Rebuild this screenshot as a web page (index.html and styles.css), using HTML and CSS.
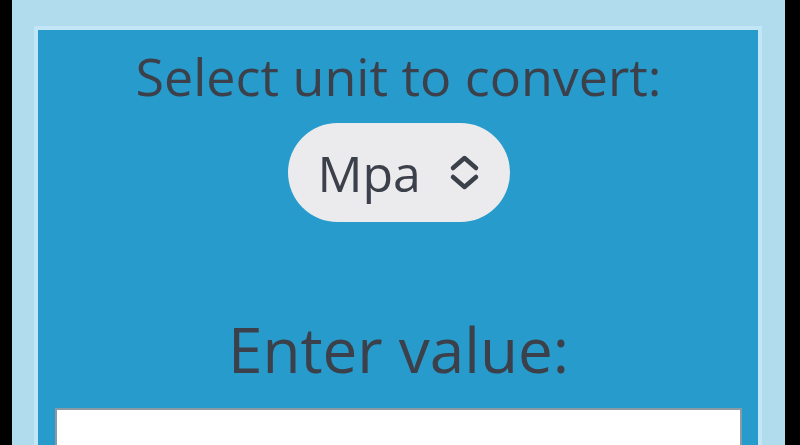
FILE: index.html
```html
<!DOCTYPE html>
<html lang="en">
<head>
  <meta charset="UTF-8" />
  <meta name="viewport" content="width=device-width, initial-scale=1" />
  <title>Pressure Converter</title>
  <link rel="stylesheet" href="styles.css">
</head>
<body>
  <div class="frame">
    <div class="panel">
      <label class="heading" for="unit">Select unit to convert:</label>

      <div class="unit-select">
        <select id="unit" name="unit">
          <option value="mpa">Mpa</option>
          <option value="kpa">Kpa</option>
          <option value="psi">Psi</option>
          <option value="bar">Bar</option>
        </select>
        <svg class="chevrons" viewBox="0 0 33 37" width="33" height="37" aria-hidden="true">
          <path d="M5 14 L16.5 4 L28 14" />
          <path d="M5 23 L16.5 33 L28 23" />
        </svg>
      </div>

      <label class="heading big" for="value">Enter value:</label>
      <input type="text" id="value" name="value" />
    </div>
  </div>
</body>
</html>
```

FILE: styles.css
```css
:root {
  --outer-color: #000;
  --frame-color: #b1dcee;
  --panel-color: #279bcb;
  --text-color: #3c404a;
  --pill-color: #ebebed;
}
* {
  box-sizing: border-box;
}
body {
  margin: 0;
  padding: 0 15px 0 12px;
  background-color: var(--outer-color);
  font-family: 'Open Sans', 'Noto Sans', sans-serif;
  color: var(--text-color);
  overflow: hidden;
}
.frame {
  background-color: var(--frame-color);
  padding: 26px 23px 0 22px;
  min-height: 100vh;
}
.panel {
  background-color: var(--panel-color);
  border: 4px solid #c2e6f5;
  border-bottom: none;
  min-height: 600px;
  display: flex;
  flex-direction: column;
  align-items: center;
  padding: 12px 16px 0 17px;
}
.heading {
  display: block;
  font-size: 52px;
  line-height: 62px;
  margin-top: 3px;
}
.heading.big {
  font-size: 62px;
  line-height: 74px;
  margin-top: 90px;
}
.unit-select {
  margin-top: 16px;
  height: 99px;
  width: 222px;
  border-radius: 50px;
  background-color: var(--pill-color);
  display: flex;
  align-items: center;
  gap: 26px;
  padding: 0 28px 0 30px;
}
.unit-select select {
  appearance: none;
  -webkit-appearance: none;
  border: none;
  background: transparent;
  font-family: inherit;
  font-size: 50px;
  color: var(--text-color);
  padding: 0;
  margin: 0;
  outline: none;
}
.chevrons {
  flex: none;
  fill: none;
  stroke: var(--text-color);
  stroke-width: 4.5;
  stroke-linecap: round;
  stroke-linejoin: round;
}
input[type="text"] {
  align-self: stretch;
  margin-top: 22px;
  height: 70px;
  border: 2px solid #8a9aa4;
  background-color: #fff;
  font-size: 40px;
  font-family: inherit;
}
```
